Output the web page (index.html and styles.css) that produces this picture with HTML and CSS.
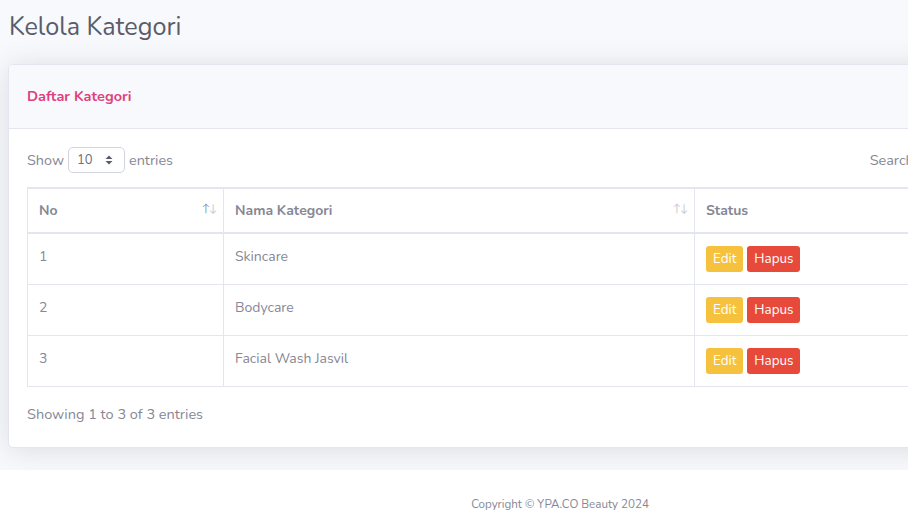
FILE: index.html
```html
<!DOCTYPE html>
<html lang="id">
<head>
<meta charset="utf-8">
<title>Kelola Kategori</title>
<link rel="stylesheet" href="styles.css">
</head>
<body>
<div class="wrapper">
  <main class="content">
    <h1 class="page-title">Kelola Kategori</h1>
    <section class="card">
      <div class="card-header">
        <h6 class="card-title">Daftar Kategori</h6>
      </div>
      <div class="card-body">
        <div class="dt-top">
          <div class="dt-length">
            <span>Show</span>
            <div class="select">
              <span>10</span>
              <svg class="caret" width="8" height="10" viewBox="0 0 8 10"><path d="M4 0.5 L7.5 4 H0.5 Z M4 9.5 L7.5 6 H0.5 Z" fill="#5a5c69"/></svg>
            </div>
            <span>entries</span>
          </div>
          <div class="dt-filter">
            <span>Search:</span>
            <div class="search-input"></div>
          </div>
        </div>
        <table class="table">
          <colgroup>
            <col class="c-no">
            <col class="c-name">
            <col class="c-status">
          </colgroup>
          <thead>
            <tr>
              <th class="sortable asc"><span class="th-label">No</span><span class="arrows"><span class="up">↑</span><span class="down">↓</span></span></th>
              <th class="sortable"><span class="th-label">Nama Kategori</span><span class="arrows"><span class="up">↑</span><span class="down">↓</span></span></th>
              <th>Status</th>
            </tr>
          </thead>
          <tbody>
            <tr>
              <td>1</td>
              <td>Skincare</td>
              <td><span class="btn btn-warning">Edit</span><span class="btn btn-danger">Hapus</span></td>
            </tr>
            <tr>
              <td>2</td>
              <td>Bodycare</td>
              <td><span class="btn btn-warning">Edit</span><span class="btn btn-danger">Hapus</span></td>
            </tr>
            <tr>
              <td>3</td>
              <td>Facial Wash Jasvil</td>
              <td><span class="btn btn-warning">Edit</span><span class="btn btn-danger">Hapus</span></td>
            </tr>
          </tbody>
        </table>
        <div class="dt-info">Showing 1 to 3 of 3 entries</div>
      </div>
    </section>
  </main>
  <footer class="footer">
    <span>Copyright © YPA.CO Beauty 2024</span>
  </footer>
</div>
</body>
</html>
```

FILE: styles.css
```css
html, body {
  margin: 0;
  padding: 0;
}
body {
  background: #fff;
  overflow: hidden;
  font-family: "Nunito", "Lato", "Open Sans", sans-serif;
  color: #858796;
  font-size: 14px;
}
.wrapper {
  width: 1120px;
}
.content {
  background: #f8f9fc;
  padding: 10px 8px 22px 8px;
}
.page-title {
  margin: 0 0 20px 1px;
  font-size: 25.2px;
  font-weight: 400;
  line-height: 34px;
  color: #5a5c69;
}
.card {
  background: #fff;
  border: 1px solid #e3e6f0;
  border-radius: 5px;
  box-shadow: 0 2px 28px 0 rgba(58, 59, 69, 0.15);
  overflow: hidden;
}
.card-header {
  background: #f8f9fc;
  border-bottom: 1px solid #e3e6f0;
  padding: 19px 18px 20px;
}
.card-title {
  margin: 0;
  font-size: 14.5px;
  line-height: 24px;
  font-weight: 700;
  color: #e0407f;
}
.card-body {
  padding: 18px 19px 22px 18px;
}
.dt-top {
  display: flex;
  justify-content: space-between;
  align-items: center;
  height: 26px;
  margin-bottom: 14px;
}
.dt-length, .dt-filter {
  display: flex;
  align-items: center;
  gap: 4px;
}
.dt-length {
  font-size: 14.4px;
}
.select {
  width: 57px;
  height: 26px;
  box-sizing: border-box;
  border: 1px solid #d1d3e2;
  border-radius: 5px;
  display: flex;
  align-items: center;
  justify-content: space-between;
  padding: 0 11px 0 8px;
  color: #6e707e;
  font-size: 13px;
}
.dt-filter {
  font-size: 14.4px;
}
.search-input {
  width: 171px;
  height: 26px;
  box-sizing: border-box;
  border: 1px solid #d1d3e2;
  border-radius: 5px;
}
.table {
  width: 1065px;
  border-collapse: collapse;
  border: 1px solid #e3e6f0;
  table-layout: fixed;
}
.c-no { width: 196px; }
.c-name { width: 471px; }
.table th, .table td {
  border: 1px solid #e3e6f0;
  text-align: left;
  vertical-align: top;
  line-height: 21px;
}
.table th {
  font-weight: 700;
  padding: 11px 11px;
  border-top: 2px solid #e3e6f0;
  border-bottom: 2px solid #e3e6f0;
}
.table th.sortable {
  padding-right: 7px;
}
.th-label {
  float: left;
}
.arrows {
  float: right;
  font-size: 11px;
  font-weight: 400;
  color: #c8c9d2;
  line-height: 14px;
  margin-top: 2px;
  letter-spacing: -1px;
}
.asc .arrows .up { color: #8a9ab8; }
.table td {
  padding: 12px 11px 12px;
}
.btn {
  display: inline-block;
  font-size: 13.4px;
  line-height: 26px;
  height: 26px;
  padding: 0 7px;
  border-radius: 3px;
  color: #fff;
  margin-right: 4px;
  vertical-align: top;
}
.btn-warning { background: #f6c23e; }
.btn-danger { background: #e74a3b; }
.dt-info {
  margin-top: 17px;
  line-height: 21px;
  font-size: 14.5px;
}
.footer {
  background: #fff;
  text-align: center;
  padding: 26px 0 10px;
  font-size: 11.6px;
  line-height: 16px;
}
```
